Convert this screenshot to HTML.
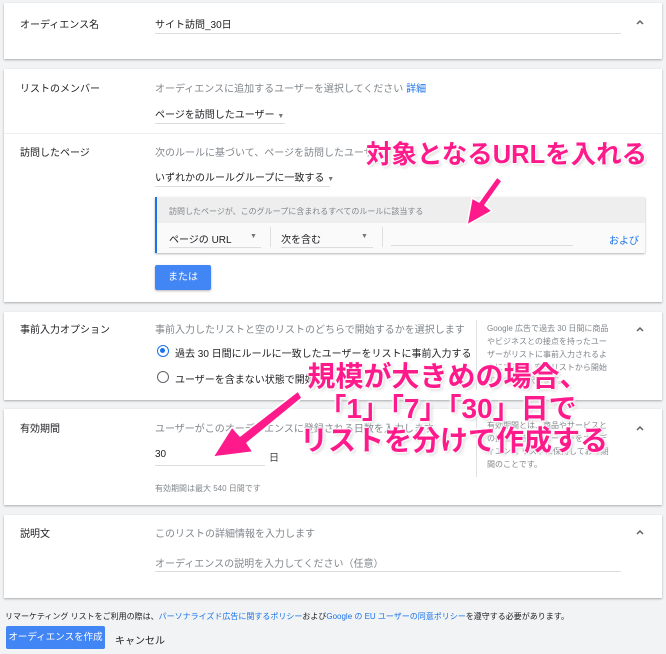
<!DOCTYPE html>
<html><head><meta charset="utf-8"><style>
*{margin:0;padding:0;box-sizing:border-box}
body{width:666px;height:654px;background:#f1f3f4;font-family:"Liberation Sans","Noto Sans CJK JP",sans-serif;position:relative;overflow:hidden;color:#3c4043}
.card{position:absolute;left:4px;width:658px;background:#fff;box-shadow:0 1px 2px rgba(0,0,0,.3)}
.a{position:absolute;font-size:10px;white-space:nowrap}
.lbl{left:16px;color:#202124}
.g{color:#80868b}
.ln{position:absolute;height:1px;background:#dadce0}
.car{position:absolute;right:18px}
.tri{font-size:7px;color:#777}
.big{position:absolute;color:#ff1a8c;font-weight:bold;white-space:nowrap;text-shadow:0 0 2px #fff,0 0 3px #fff,1px 1px 2px #fff,-1px -1px 2px #fff,2px 2px 3px #ccc}
</style></head><body>
<div class="card" style="top:3px;height:56px">
<div class="a lbl" style="top:13px">オーディエンス名</div>
<div class="a" style="left:151px;top:13px;color:#202124">サイト訪問_30日</div>
<div class="ln" style="left:151px;width:466px;top:30px"></div>
<svg class="car" style="top:16px" width="8" height="6"><path d="M1 5 L4 2 L7 5" fill="none" stroke="#5f6368" stroke-width="1.5"/></svg>
</div>
<div class="card" style="top:69px;height:233px">
<div class="a lbl" style="top:11px">リストのメンバー</div>
<div class="a g" style="left:151px;top:11px">オーディエンスに追加するユーザーを選択してください <span style="color:#1a73e8">詳細</span></div>
<div class="a" style="left:151px;top:37px;color:#202124">ページを訪問したユーザー <span class="tri">▼</span></div>
<div class="ln" style="left:151px;width:130px;top:54px"></div>
<div class="ln" style="left:0;width:658px;top:64px;background:#eee"></div>
<div class="a lbl" style="top:75px">訪問したページ</div>
<div class="a g" style="left:151px;top:75px">次のルールに基づいて、ページを訪問したユーザー</div>
<div class="a" style="left:151px;top:100px;color:#202124">いずれかのルールグループに一致する <span class="tri">▼</span></div>
<div class="ln" style="left:151px;width:175px;top:117px"></div>
<div style="position:absolute;left:151px;top:128px;width:490px;height:56px;background:#fafafa;border-left:2px solid #1a73e8;box-shadow:0 1px 2px rgba(0,0,0,.3)">
<div style="height:26px;background:#eeeeee"></div>
<div class="a g" style="left:12px;top:9px;font-size:8px">訪問したページが、このグループに含まれるすべてのルールに該当する</div>
<div class="a" style="left:12px;top:34px;color:#202124">ページの URL</div><div class="a tri" style="left:93px;top:36px">▼</div>
<div class="ln" style="left:12px;width:92px;top:50px"></div>
<div style="position:absolute;left:113px;top:30px;width:1px;height:20px;background:#e0e0e0"></div>
<div class="a" style="left:124px;top:34px;color:#202124">次を含む</div><div class="a tri" style="left:204px;top:36px">▼</div>
<div class="ln" style="left:124px;width:92px;top:50px"></div>
<div style="position:absolute;left:225px;top:30px;width:1px;height:20px;background:#e0e0e0"></div>
<div class="ln" style="left:234px;width:182px;top:48px"></div>
<div class="a" style="left:452px;top:35px;color:#1a73e8">および</div>
</div>
<div style="position:absolute;left:151px;top:196px;width:56px;height:25px;background:#4285f4;color:#fff;font-size:10px;text-align:center;line-height:25px;border-radius:2px;box-shadow:0 1px 2px rgba(0,0,0,.3)">または</div>
</div>
<div class="card" style="top:312px;height:88px">
<div class="a lbl" style="top:9px">事前入力オプション</div>
<div class="a g" style="left:151px;top:9px">事前入力したリストと空のリストのどちらで開始するかを選択します</div>
<div style="position:absolute;left:153px;top:33px;width:12px;height:12px;border:1.5px solid #1a73e8;border-radius:50%"><div style="margin:2px;width:5px;height:5px;background:#1a73e8;border-radius:50%"></div></div>
<div class="a" style="left:171px;top:33px;color:#202124">過去 30 日間にルールに一致したユーザーをリストに事前入力する</div>
<div style="position:absolute;left:153px;top:59px;width:12px;height:12px;border:1.5px solid #5f6368;border-radius:50%"></div>
<div class="a" style="left:171px;top:59px;color:#202124">ユーザーを含まない状態で開始</div>
<div style="position:absolute;left:472px;top:8px;width:1px;height:70px;background:#e0e0e0"></div>
<div class="a g" style="left:483px;top:10px;font-size:8px;line-height:13px;white-space:normal;width:125px">Google 広告で過去 30 日間に商品やビジネスとの接点を持ったユーザーがリストに事前入力されるようにするか、空のリストから開始するかを選択します。</div>
<svg class="car" style="top:14px" width="8" height="6"><path d="M1 5 L4 2 L7 5" fill="none" stroke="#5f6368" stroke-width="1.5"/></svg>
</div>
<div class="card" style="top:409px;height:96px">
<div class="a lbl" style="top:11px">有効期間</div>
<div class="a g" style="left:151px;top:11px">ユーザーがこのオーディエンスに登録される日数を入力します</div>
<div class="a" style="left:151px;top:40px;color:#202124">30</div>
<div class="ln" style="left:151px;width:110px;top:56px"></div>
<div class="a" style="left:265px;top:40px">日</div>
<div class="a g" style="left:151px;top:74px;font-size:8px">有効期間は最大 540 日間です</div>
<div style="position:absolute;left:472px;top:8px;width:1px;height:60px;background:#e0e0e0"></div>
<div class="a g" style="left:483px;top:10px;font-size:8px;line-height:13px;white-space:normal;width:125px">有効期間とは、商品やサービスとの接点を持ったユーザーをオーディエンス リストに保持しておく期間のことです。</div>
<svg class="car" style="top:16px" width="8" height="6"><path d="M1 5 L4 2 L7 5" fill="none" stroke="#5f6368" stroke-width="1.5"/></svg>
</div>
<div class="card" style="top:515px;height:83px">
<div class="a lbl" style="top:10px">説明文</div>
<div class="a g" style="left:151px;top:10px">このリストの詳細情報を入力します</div>
<div class="a g" style="left:151px;top:40px">オーディエンスの説明を入力してください（任意）</div>
<div class="ln" style="left:151px;width:466px;top:56px"></div>
<svg class="car" style="top:14px" width="8" height="6"><path d="M1 5 L4 2 L7 5" fill="none" stroke="#5f6368" stroke-width="1.5"/></svg>
</div>
<div class="a" style="left:5px;top:611px;font-size:8px;color:#202124">リマーケティング リストをご利用の際は、<span style="color:#1a73e8">パーソナライズド広告に関するポリシー</span>および<span style="color:#1a73e8">Google の EU ユーザーの同意ポリシー</span>を遵守する必要があります。</div>
<div style="position:absolute;left:6px;top:626px;width:99px;height:23px;background:#4285f4;color:#fff;font-size:9.5px;line-height:23px;text-align:center;border-radius:2px;white-space:nowrap;overflow:hidden">オーディエンスを作成</div>
<div class="a" style="left:115px;top:632px;color:#202124">キャンセル</div>
<svg style="position:absolute;left:0;top:0" width="666" height="654">
<path d="M497 177 L502 181 L485 205 L492 211 L467 225 L472 198 L479 202 Z" fill="#ff1a8c" stroke="#fff" stroke-width="1.5" stroke-linejoin="round"/>
<path d="M298 391 L302 398 L247 443 L253 452 L213 457 L232 427 L240 436 Z" fill="#ff1a8c" stroke="#fff" stroke-width="1.5" stroke-linejoin="round"/>
</svg>
<div class="big" style="left:366px;top:134px;font-size:25.5px">対象となるURLを入れる</div>
<div class="big" style="left:300px;top:361px;font-size:28px;line-height:32px;text-align:center;width:295px">規模が大きめの場合、<br>「1」「7」「30」日で<br>リストを分けて作成する</div>
</body></html>
